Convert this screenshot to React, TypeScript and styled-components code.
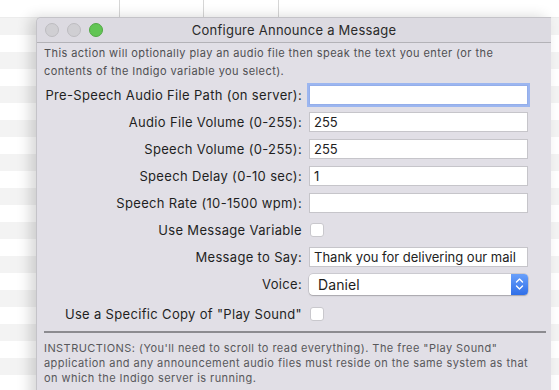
import React from "react";
import styled, { createGlobalStyle } from "styled-components";

const Global = createGlobalStyle`
  html, body { margin: 0; padding: 0; background: #ffffff; overflow: hidden; }
  #root { width: 559px; height: 390px; }
`;

const Desktop = styled.div`
  position: relative;
  width: 559px;
  height: 390px;
  overflow: hidden;
  background: #ffffff;
  font-family: Inter, "Liberation Sans", Arial, sans-serif;
`;

const TableHeader = styled.div`
  display: flex;
  height: 17px;
  border-bottom: 1px solid #ececec;
`;

const HeaderCell = styled.div<{ $w: number }>`
  width: ${(p) => p.$w}px;
  flex: none;
  border-right: 1px solid #d6d6d6;
`;

const TableBody = styled.div`
  height: 372px;
  background: repeating-linear-gradient(
    to bottom,
    #f3f3f3 0px,
    #f3f3f3 17px,
    #ffffff 17px,
    #ffffff 34px
  );
`;

const Window = styled.div`
  position: absolute;
  left: 36px;
  top: 17px;
  width: 514px;
  height: 390px;
  background: #e1dfe6;
  border-top: 1px solid #c4c3c8;
  border-left: 1px solid #c4c3c8;
  border-top-left-radius: 5px;
  box-shadow: -6px 0 14px rgba(0, 0, 0, 0.16);
  display: flex;
  flex-direction: column;
`;

const TitleBar = styled.div`
  position: relative;
  height: 24px;
  flex: none;
  display: flex;
  align-items: center;
  justify-content: center;
  background: #dcdae1;
  border-bottom: 1px solid #b3b2b7;
  border-top-left-radius: 5px;
`;

const Lights = styled.div`
  position: absolute;
  left: 8px;
  top: 5px;
  display: flex;
  gap: 8px;
`;

const Light = styled.span<{ $c: string; $b: string }>`
  width: 12px;
  height: 12px;
  border-radius: 50%;
  background: ${(p) => p.$c};
  border: 0.5px solid ${(p) => p.$b};
`;

const Title = styled.div`
  font-size: 13px;
  letter-spacing: 0.25px;
  color: #2a2a2a;
`;

const Content = styled.div`
  padding: 0 6px 0 7px;
  display: flex;
  flex-direction: column;
`;

const Note = styled.div`
  font-size: 11px;
  line-height: 18px;
  color: #4f4f52;
  padding-top: 1px;
  letter-spacing: 0.42px;
  white-space: nowrap;
`;

const Form = styled.div`
  display: grid;
  grid-template-columns: 258px 219px;
  column-gap: 7px;
  margin-top: 1px;
`;

const Label = styled.div<{ $h: number }>`
  height: ${(p) => p.$h}px;
  display: flex;
  align-items: center;
  justify-content: flex-end;
  font-size: 13px;
  letter-spacing: 0.33px;
  color: #1f1f1f;
  white-space: nowrap;
`;

const Cell = styled.div<{ $h: number }>`
  height: ${(p) => p.$h}px;
  display: flex;
  align-items: center;
`;

const TextField = styled.div<{ $focus?: boolean }>`
  box-sizing: border-box;
  width: 219px;
  height: 20px;
  background: #ffffff;
  border: 1px solid #c6c5ca;
  display: flex;
  align-items: center;
  padding-left: 4px;
  font-size: 13px;
  color: #222;
  white-space: nowrap;
  overflow: hidden;
  ${(p) =>
    p.$focus
      ? `border: 1px solid #94aeea; box-shadow: 0 0 0 2px #9cb6f0;`
      : ""}
`;

const Check = styled.span`
  box-sizing: border-box;
  width: 14px;
  height: 14px;
  border-radius: 3px;
  background: #ffffff;
  border: 1px solid #c9c8cd;
  margin-left: 1px;
`;

const Popup = styled.div`
  box-sizing: border-box;
  width: 219px;
  height: 21px;
  background: #ffffff;
  border-radius: 4px;
  box-shadow: 0 0 0 0.5px rgba(0, 0, 0, 0.18), 0 1px 1.5px rgba(0, 0, 0, 0.18);
  display: flex;
  align-items: center;
  font-size: 14px;
  color: #1d1d1d;
`;

const PopupText = styled.span`
  flex: 1;
  padding-left: 9px;
  letter-spacing: 0.1px;
`;

const Stepper = styled.span`
  width: 17px;
  height: 21px;
  border-radius: 0 4px 4px 0;
  background: linear-gradient(to bottom, #69a0fb, #2f6fe8);
  display: flex;
  align-items: center;
  justify-content: center;
`;

const Rule = styled.div`
  height: 2px;
  background: #8c8b90;
  margin: 2px 0 0 0;
  width: 502px;
`;

const Instructions = styled.div`
  font-size: 11px;
  line-height: 15px;
  color: #58585b;
  padding-top: 8px;
  letter-spacing: 0.44px;
  white-space: nowrap;
`;

type Row =
  | { kind: "text"; label: string; value: string; h: number; focus?: boolean }
  | { kind: "check"; label: string; h: number }
  | { kind: "popup"; label: string; value: string; h: number };

const rows: Row[] = [
  { kind: "text", label: "Pre-Speech Audio File Path (on server):", value: "", h: 27, focus: true },
  { kind: "text", label: "Audio File Volume (0-255):", value: "255", h: 27 },
  { kind: "text", label: "Speech Volume (0-255):", value: "255", h: 27 },
  { kind: "text", label: "Speech Delay (0-10 sec):", value: "1", h: 27 },
  { kind: "text", label: "Speech Rate (10-1500 wpm):", value: "", h: 27 },
  { kind: "check", label: "Use Message Variable", h: 27 },
  { kind: "text", label: "Message to Say:", value: "Thank you for delivering our mail", h: 27 },
  { kind: "popup", label: "Voice:", value: "Daniel", h: 28 },
  { kind: "check", label: 'Use a Specific Copy of "Play Sound"', h: 31 },
];

export default function App() {
  return (
    <>
      <Global />
      <Desktop>
        <TableHeader>
          <HeaderCell $w={119} />
          <HeaderCell $w={83} />
          <HeaderCell $w={74} />
        </TableHeader>
        <TableBody />
        <Window>
          <TitleBar>
            <Lights>
              <Light $c="#d0cfd3" $b="#bdbcc0" />
              <Light $c="#d0cfd3" $b="#bdbcc0" />
              <Light $c="#62c554" $b="#52a845" />
            </Lights>
            <Title>Configure Announce a Message</Title>
          </TitleBar>
          <Content>
            <Note>
              This action will optionally play an audio file then speak the text you enter (or the
              <br />
              contents of the Indigo variable you select).
            </Note>
            <Form>
              {rows.map((r, i) => (
                <React.Fragment key={i}>
                  <Label $h={r.h}>{r.label}</Label>
                  <Cell $h={r.h}>
                    {r.kind === "text" && <TextField $focus={r.focus}>{r.value}</TextField>}
                    {r.kind === "check" && <Check />}
                    {r.kind === "popup" && (
                      <Popup>
                        <PopupText>{r.value}</PopupText>
                        <Stepper>
                          <svg width="9" height="14" viewBox="0 0 9 14">
                            <path d="M1.5 5 L4.5 2 L7.5 5" fill="none" stroke="#fff" strokeWidth="1.4" strokeLinecap="round" strokeLinejoin="round" />
                            <path d="M1.5 9 L4.5 12 L7.5 9" fill="none" stroke="#fff" strokeWidth="1.4" strokeLinecap="round" strokeLinejoin="round" />
                          </svg>
                        </Stepper>
                      </Popup>
                    )}
                  </Cell>
                </React.Fragment>
              ))}
            </Form>
            <Rule />
            <Instructions>
              INSTRUCTIONS: (You'll need to scroll to read everything). The free "Play Sound"
              <br />
              application and any announcement audio files must reside on the same system as that
              <br />
              on which the Indigo server is running.
            </Instructions>
          </Content>
        </Window>
      </Desktop>
    </>
  );
}
